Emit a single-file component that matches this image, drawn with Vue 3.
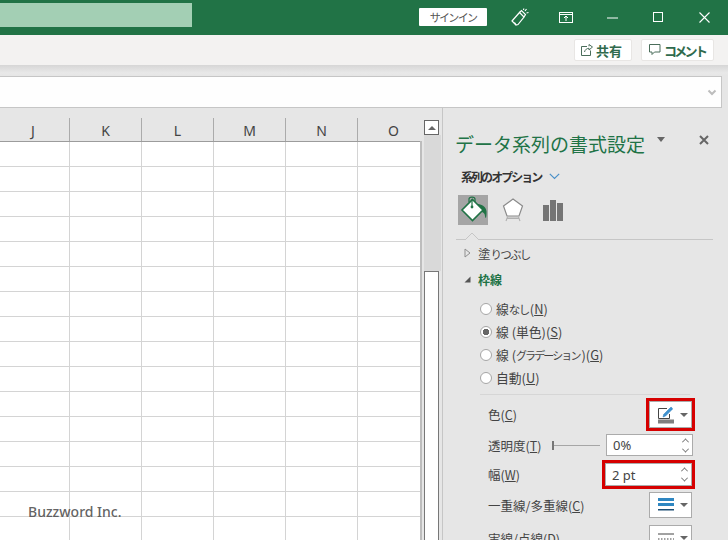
<script setup>
const columns = ['J', 'K', 'L', 'M', 'N', 'O']
const rowCount = 16
</script>

<template>
  <div class="app">
    <header class="titlebar">
      <div class="search"></div>
      <button class="signin">サインイン</button>
      <svg class="ti coauth" width="18" height="18" viewBox="0 0 18 18" fill="none" stroke="#fff" stroke-width="1.200">
        <path d="M1 13 8.500 4.500 13 9 7 16.500l-2 .5-4-4z" />
        <path d="M8.500 4.500 10.500 2.500 14.500 6.500 13 9M5 17 3.500 14.500" />
        <path d="M14 3 15.500 1M15.500 5 17.500 4.500M12.500 2 12.800.500" />
      </svg>
      <svg class="ti display" width="14" height="11" viewBox="0 0 14 11" fill="none" stroke="#fff" stroke-width="1">
        <rect x=".5" y=".5" width="13" height="10" />
        <path d="M.5 2.500h13M7 9V4.500M5 6l2-2 2 2" />
      </svg>
      <svg class="ti minimize" width="11" height="2" viewBox="0 0 11 2"><path d="M0 1h11" stroke="#fff" stroke-width="1" /></svg>
      <svg class="ti maximize" width="10" height="10" viewBox="0 0 10 10" fill="none"><rect x=".5" y=".5" width="9" height="9" stroke="#fff" /></svg>
      <svg class="ti close" width="11" height="11" viewBox="0 0 11 11"><path d="M.5.500l10 10M10.500.500l-10 10" stroke="#fff" stroke-width="1.100" /></svg>
    </header>

    <div class="ribbon">
      <button class="rb share">
        <svg width="12" height="12" viewBox="0 0 12 12" fill="none" stroke="#4a6d5a" stroke-width="1">
          <path d="M6 2.500H.5v9h9V6.500" />
          <path d="M3.500 8C4 5.500 6 4.300 8 4.300V6l3.500-3L8 .5v1.800" />
        </svg>
        <span>共有</span>
      </button>
      <button class="rb comment">
        <svg width="12" height="12" viewBox="0 0 12 12" fill="none" stroke="#4a6d5a" stroke-width="1">
          <path d="M.5.500h10.500v7.500H5.500L3 10.500V8H.5z" />
        </svg>
        <span class="tight">コメント</span>
      </button>
    </div>

    <div class="shade"></div>

    <div class="formula">
      <svg width="10" height="7" viewBox="0 0 10 7" fill="none"><path d="M1.500 1.500 5 5l3.500-3.500" stroke="#bdbdbd" stroke-width="2" /></svg>
    </div>

    <main class="main">
      <section class="sheet">
        <div class="col-head">
          <div v-for="c in columns" :key="c" class="head-cell">{{ c }}</div>
        </div>
        <div class="grid">
          <template v-for="r in rowCount" :key="r">
            <div v-for="c in columns" :key="c" class="cell"></div>
          </template>
        </div>
        <div class="watermark">Buzzword Inc.</div>
      </section>

      <aside class="vscroll">
        <button class="up"><span class="up-tri"></span></button>
        <div class="track"></div>
        <div class="thumb"></div>
      </aside>

      <section class="pane">
        <div class="pane-title">
          <h1>データ系列の書式設定</h1>
          <span class="title-caret"></span>
          <svg class="pane-close" width="10" height="10" viewBox="0 0 10 10"><path d="M1 1l8 8M9 1 1 9" stroke="#666" stroke-width="2" /></svg>
        </div>

        <div class="options">
          <span class="options-label">系列のオプション</span>
          <svg width="11" height="7" viewBox="0 0 11 7" fill="none"><path d="M.8.800 5.500 5.500 10.200.800" stroke="#4a90c8" stroke-width="1.200" /></svg>
        </div>

        <div class="tabs">
          <div class="tab on">
            <svg width="30" height="30" viewBox="0 0 30 30">
              <path d="M19 9c4 0 9 2.500 9.500 7 .2 2.500 0 5-.5 7-.8 0-1-1.500-1.200-3-.2-1.500-1.300-2.500-2.800-3z" fill="#217346" />
              <path d="M14.500 4.500 25 15 14.500 25.500 4 15z" fill="#fff" stroke="#217346" stroke-width="1.600" />
              <path d="M14 4v8" stroke="#217346" stroke-width="1.200" />
              <path d="M11 7V4c0-2.600 6-2.600 6 0v3" fill="none" stroke="#217346" stroke-width="1.200" />
              <circle cx="14" cy="12" r="1.400" fill="#217346" />
            </svg>
          </div>
          <div class="tab">
            <svg width="22" height="24" viewBox="0 0 22 24">
              <path d="M11 1 20.500 8 17 18H5L1.500 8z" fill="#fff" stroke="#8a8a8a" stroke-width="1.200" />
              <path d="M4 23 5.500 19h11l1.500 4M5.500 20.500h11" fill="none" stroke="#b0b0b0" stroke-width="1.100" />
            </svg>
          </div>
          <div class="tab">
            <svg width="20" height="22" viewBox="0 0 20 22" fill="#757575">
              <rect x="0" y="6" width="6" height="16" />
              <rect x="7" y="1" width="6" height="21" />
              <rect x="14" y="4" width="6" height="18" />
            </svg>
          </div>
        </div>

        <div class="rule">
          <svg class="notch" width="14" height="8" viewBox="0 0 14 8"><path d="M0 8 7 1l7 7" fill="#e6e6e6" stroke="#c6c6c6" /></svg>
        </div>

        <div class="sec fill">
          <svg width="7" height="10" viewBox="0 0 7 10" fill="none"><path d="M1 1v8l5-4z" stroke="#8f8f8f" /></svg>
          <span class="sec-label">塗<span class="kana">りつぶし</span></span>
        </div>
        <div class="sec line">
          <svg width="7" height="7" viewBox="0 0 7 7"><path d="M6.500.500v6h-6z" fill="#555" /></svg>
          <span class="sec-label strong">枠線</span>
        </div>

        <div class="radios">
          <label class="radio"><i class="dot"></i><span>線<span class="kana-sm">なし</span>(<u>N</u>)</span></label>
          <label class="radio"><i class="dot sel"></i><span>線 (単色)(<u>S</u>)</span></label>
          <label class="radio"><i class="dot"></i><span>線 (<span class="narrow">グラデーション</span>)(<u>G</u>)</span></label>
          <label class="radio"><i class="dot"></i><span>自動(<u>U</u>)</span></label>
        </div>

        <div class="rule inner"></div>

        <div class="row r-color">
          <span>色(<u>C</u>)</span>
          <button class="pick hl">
            <svg width="18" height="18" viewBox="0 0 18 18">
              <path d="M10 2.500H1.500v10h11V8" fill="none" stroke="#444" stroke-width="1" />
              <path d="M6 11l.8-2.800L13.500 1.500c1-.6 2.400.8 1.800 1.800L8.600 10z" fill="#3f93d1" stroke="#2a7ab8" stroke-width=".5" />
              <rect x="1" y="13.500" width="16" height="4" fill="#7f7f7f" />
            </svg>
            <i class="caret"></i>
          </button>
        </div>

        <div class="row r-alpha">
          <span class="alpha-label">透明度(<u>T</u>)</span>
          <div class="slider"></div>
          <div class="spin"><span>0%</span><i class="arrows"><em class="a-up"></em><em class="a-down"></em></i></div>
        </div>

        <div class="row r-width">
          <span>幅(<u>W</u>)</span>
          <div class="spin hl"><span>2 pt</span><i class="arrows"><em class="a-up"></em><em class="a-down"></em></i></div>
        </div>

        <div class="row r-compound">
          <span>一重線/多重線(<u>C</u>)</span>
          <button class="pick">
            <svg width="18" height="16" viewBox="0 0 18 16">
              <rect x="1" y="1" width="16" height="3" fill="#2e86c1" />
              <rect x="1" y="6" width="16" height="3" fill="#2e86c1" />
              <rect x="1" y="12" width="16" height="1.500" fill="#1d4f75" />
            </svg>
            <i class="caret"></i>
          </button>
        </div>

        <div class="row r-dash">
          <span>実線/点線(<u>D</u>)</span>
          <button class="pick">
            <svg width="18" height="16" viewBox="0 0 18 16">
              <path d="M1 4h16" stroke="#444" stroke-width="1" />
              <path d="M1 9h16" stroke="#444" stroke-width="1" stroke-dasharray="1.500 1.500" />
            </svg>
            <i class="caret"></i>
          </button>
        </div>
      </section>
    </main>
  </div>
</template>

<style>
html, body { margin: 0; padding: 0; background: #e6e6e6; }
</style>

<style scoped>
.app {
  width: 728px;
  height: 540px;
  overflow: hidden;
  display: flex;
  flex-direction: column;
  background: #e6e6e6;
  font-family: "Noto Sans CJK JP", "Noto Sans", sans-serif;
  color: #444;
  font-size: 12px;
}
button { font-family: inherit; padding: 0; margin: 0; cursor: default; }

.titlebar {
  flex: 0 0 35px;
  display: flex;
  align-items: center;
  background: #217346;
}
.search { width: 192px; height: 24px; margin-top: -5px; background: #a3cfb4; }
.signin {
  width: 68px;
  height: 18px;
  margin-left: 227px;
  margin-top: -1px;
  border: 0;
  border-radius: 1px;
  background: #fff;
  color: #555;
  font-size: 11px;
  line-height: 18px;
  letter-spacing: -1.700px;
}
.ti { flex: none; }
.coauth { margin-left: 24px; margin-top: -1px; }
.display { margin-left: 30px; margin-top: -1px; }
.minimize { margin-left: 34px; }
.maximize { margin-left: 35px; margin-top: -1px; }
.close { margin-left: 36px; margin-top: -1px; }

.ribbon {
  flex: 0 0 30px;
  display: flex;
  align-items: center;
  justify-content: flex-end;
  gap: 9px;
  padding-right: 14px;
  background: #f3f2f1;
}
.rb {
  height: 22px;
  display: flex;
  align-items: center;
  border: 1px solid #e8e6e4;
  border-radius: 2px;
  background: #fff;
  color: #2f6a4d;
  font-size: 13px;
  font-weight: 700;
}
.share { width: 58px; gap: 3px; padding-left: 6px; }
.comment { width: 73px; gap: 3px; padding-left: 7px; }
.tight { letter-spacing: -2.700px; }

.shade {
  flex: 0 0 11px;
  background: linear-gradient(#d6d6d6, #e8e8e8 70%, #e6e6e6);
}

.formula {
  flex: 0 0 32px;
  box-sizing: border-box;
  margin-right: 6px;
  padding-right: 4px;
  display: flex;
  align-items: center;
  justify-content: flex-end;
  background: #fefefe;
  border: 1px solid #c6c6c6;
  border-left: 0;
}

.main { flex: 1; min-height: 0; display: flex; overflow: hidden; }

.sheet {
  position: relative;
  flex: 0 0 422px;
  box-sizing: border-box;
  overflow: hidden;
  padding-top: 10px;
}
.col-head {
  display: flex;
  width: 505px;
  margin-left: -3px;
  height: 24px;
  border-bottom: 1px solid #9c9c9c;
  box-sizing: border-box;
}
.head-cell {
  flex: 0 0 72px;
  box-sizing: border-box;
  border-right: 1px solid #ababab;
  text-align: center;
  font: 14px/25px "Noto Sans", sans-serif;
  color: #444;
}
.head-cell:first-child { flex-basis: 73px; }
.grid {
  display: grid;
  grid-template-columns: 73px repeat(5, 72px);
  grid-auto-rows: 25px;
  width: 433px;
  margin-left: -3px;
  background: #fff;
}
.cell {
  box-sizing: border-box;
  border-right: 1px solid #d4d4d4;
  border-bottom: 1px solid #d4d4d4;
}
.sheet::after {
  content: "";
  position: absolute;
  top: 33px;
  right: 0;
  bottom: 0;
  width: 2px;
  background: #bdbdbd;
}
.watermark {
  position: absolute;
  left: 28px;
  top: 394px;
  font: 500 14px/20px "Noto Sans", sans-serif;
  color: rgba(80, 80, 80, 0.9);
}

.vscroll {
  flex: 0 0 20px;
  position: relative;
  display: flex;
  flex-direction: column;
  align-items: flex-start;
  padding: 12px 0 0 2px;
  box-sizing: border-box;
}
.up {
  flex: none;
  width: 15px;
  height: 15px;
  display: flex;
  align-items: center;
  justify-content: center;
  background: #fff;
  border: 1px solid #666;
  box-sizing: border-box;
}
.up-tri {
  width: 0;
  height: 0;
  border: 4px solid transparent;
  border-top: 0;
  border-bottom: 4px solid #666;
}
.track {
  flex: 0 0 136px;
  width: 17px;
  background: #d9d9d9;
}
.thumb {
  flex: 1;
  width: 15px;
  box-sizing: border-box;
  background: #fff;
  border: 1px solid #777;
  border-bottom: 0;
}

.pane {
  flex: 1;
  min-width: 0;
  box-sizing: border-box;
  padding: 22px 15px 0 13px;
  border-left: 1px solid #c6c6c6;
  overflow: hidden;
  background: #e6e6e6;
}
.pane-title {
  height: 28px;
  display: flex;
  align-items: center;
}
.pane-title h1 {
  margin: 0 0 0 -1px;
  font-size: 19px;
  font-weight: 400;
  line-height: 28px;
  color: #217346;
  white-space: nowrap;
}
.title-caret {
  width: 0;
  height: 0;
  margin: -9px 0 0 12px;
  border: 4.500px solid transparent;
  border-top: 5px solid #666;
  border-bottom: 0;
}
.pane-close { margin: -9px 0 0 34px; }

.options {
  height: 20px;
  margin-top: 8px;
  padding-left: 5px;
  display: flex;
  align-items: center;
  gap: 8px;
}
.options-label {
  font-size: 12px;
  font-weight: 700;
  letter-spacing: -1.950px;
  color: #333;
}

.tabs {
  margin-top: 9px;
  margin-left: 2px;
  display: flex;
  gap: 10px;
  height: 30px;
}
.tab {
  width: 30px;
  height: 30px;
  display: flex;
  align-items: center;
  justify-content: center;
}
.tab.on { background: #a5a5a5; }

.rule {
  position: relative;
  margin-top: 14px;
  height: 1px;
  background: #c6c6c6;
}
.notch { position: absolute; left: 9px; top: -7px; }
.rule.inner { margin: 6px 23px 0 24px; background: #d6d6d6; }

.sec {
  height: 20px;
  display: flex;
  align-items: center;
  padding-left: 8px;
  gap: 7px;
}
.sec.fill { margin-top: 3px; }
.sec.line { margin-top: 6px; }
.sec-label { font-size: 12.500px; white-space: nowrap; }
.sec-label.strong { font-size: 12px; color: #217346; font-weight: 700; }
.kana { font-size: 11.500px; letter-spacing: -1.800px; }

.radios {
  margin-top: 10px;
  padding-left: 24px;
  display: flex;
  flex-direction: column;
  gap: 3px;
  font-size: 12.800px;
}
.radio {
  height: 20px;
  display: flex;
  align-items: center;
  gap: 4px;
  white-space: nowrap;
  line-height: 20px;
}
.dot {
  flex: none;
  width: 12px;
  height: 12px;
  box-sizing: border-box;
  border: 1px solid #a6a6a6;
  border-radius: 50%;
  background: #fff;
}
.dot.sel { background: radial-gradient(circle, #666 0 3px, #fff 3.500px); }
.kana-sm { font-size: 11.500px; letter-spacing: -1.500px; padding-right: 1px; }
.narrow { font-size: 11px; letter-spacing: -1.900px; padding-right: 2px; }

.row {
  display: flex;
  align-items: center;
  justify-content: space-between;
  padding: 0 21px 0 32px;
  white-space: nowrap;
  font-size: 12.500px;
}
.r-color { height: 27px; margin-top: 6px; }
.r-alpha { height: 22px; margin-top: 6px; }
.r-width { height: 23px; margin-top: 7px; }
.r-compound { height: 26px; margin-top: 6px; }
.r-dash { height: 26px; margin-top: 7px; }

.pick {
  flex: none;
  width: 43px;
  height: 100%;
  box-sizing: border-box;
  display: flex;
  align-items: center;
  padding-left: 7px;
  gap: 5px;
  background: #fff;
  border: 1px solid #ababab;
}
.caret {
  flex: none;
  width: 0;
  height: 0;
  border: 4px solid transparent;
  border-top: 4px solid #666;
  border-bottom: 0;
}
.hl { outline: 3px solid #d60000; }

.alpha-label { flex: 0 0 64px; }
.slider {
  flex: none;
  width: 48px;
  height: 9px;
  background: linear-gradient(#a6a6a6, #a6a6a6) center / 100% 1px no-repeat;
  border-left: 2px solid #777;
  box-sizing: border-box;
}
.spin {
  flex: none;
  width: 87px;
  height: 100%;
  box-sizing: border-box;
  display: flex;
  align-items: center;
  justify-content: space-between;
  padding: 0 3px 0 6px;
  background: #fff;
  border: 1px solid #ababab;
  color: #444;
  font-size: 13px;
  font-family: "Noto Sans", sans-serif;
}
.r-alpha .spin { margin-left: 6px; }
.arrows {
  display: flex;
  flex-direction: column;
  gap: 5px;
  margin-right: 1px;
}
.arrows em {
  display: block;
  width: 5px;
  height: 5px;
  box-sizing: border-box;
  border-left: 1px solid #777;
  border-top: 1px solid #777;
}
.a-up { transform: rotate(45deg) translate(1px, 1px); }
.a-down { transform: rotate(225deg) translate(1px, 1px); }
</style>
